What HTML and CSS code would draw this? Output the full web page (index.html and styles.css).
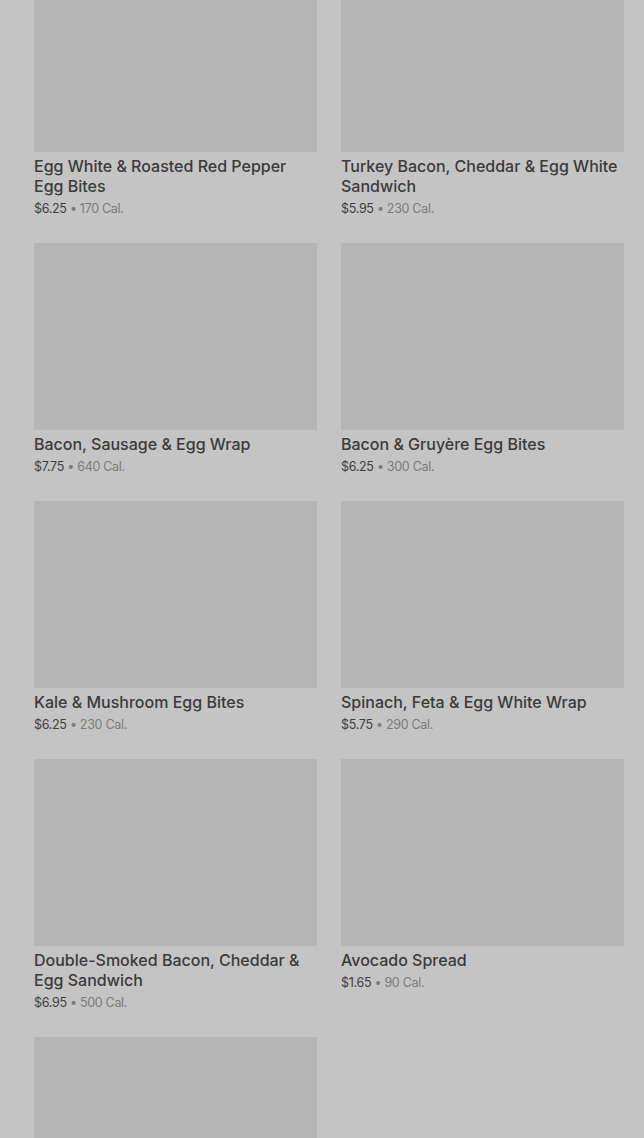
FILE: index.html
```html
<!DOCTYPE html>
<html lang="en">
<head>
<meta charset="utf-8">
<title>Menu</title>
<link rel="stylesheet" href="styles.css">
</head>
<body>
<main class="page">
  <div class="grid">
    <article class="item"><div class="thumb"></div><h3 class="name">Egg White &amp; Roasted Red Pepper Egg Bites</h3><p class="meta"><span class="price">$6.25</span> <span class="cal">• 170 Cal.</span></p></article>
    <article class="item"><div class="thumb"></div><h3 class="name">Turkey Bacon, Cheddar &amp; Egg White Sandwich</h3><p class="meta"><span class="price">$5.95</span> <span class="cal">• 230 Cal.</span></p></article>
    <article class="item"><div class="thumb"></div><h3 class="name">Bacon, Sausage &amp; Egg Wrap</h3><p class="meta"><span class="price">$7.75</span> <span class="cal">• 640 Cal.</span></p></article>
    <article class="item"><div class="thumb"></div><h3 class="name">Bacon &amp; Gruyère Egg Bites</h3><p class="meta"><span class="price">$6.25</span> <span class="cal">• 300 Cal.</span></p></article>
    <article class="item"><div class="thumb"></div><h3 class="name">Kale &amp; Mushroom Egg Bites</h3><p class="meta"><span class="price">$6.25</span> <span class="cal">• 230 Cal.</span></p></article>
    <article class="item"><div class="thumb"></div><h3 class="name">Spinach, Feta &amp; Egg White Wrap</h3><p class="meta"><span class="price">$5.75</span> <span class="cal">• 290 Cal.</span></p></article>
    <article class="item"><div class="thumb"></div><h3 class="name">Double-Smoked Bacon, Cheddar &amp; Egg Sandwich</h3><p class="meta"><span class="price">$6.95</span> <span class="cal">• 500 Cal.</span></p></article>
    <article class="item"><div class="thumb"></div><h3 class="name">Avocado Spread</h3><p class="meta"><span class="price">$1.65</span> <span class="cal">• 90 Cal.</span></p></article>
    <article class="item"><div class="thumb"></div></article>
  </div>
</main>
</body>
</html>
```

FILE: styles.css
```css
html, body {
  margin: 0;
  padding: 0;
  background: #c4c4c4;
  overflow: hidden;
  height: 1138px;
}
.page {
  padding: 0 20px 0 34px;
  font-family: Inter, "Noto Sans", Roboto, sans-serif;
}
.grid {
  margin-top: -35px;
  display: grid;
  grid-template-columns: 283px 283px;
  column-gap: 24px;
  row-gap: 26px;
  align-items: start;
}
.thumb {
  height: 187px;
  background: #b6b6b6;
}
.name {
  margin: 4px 0 0;
  font-size: 16px;
  line-height: 20px;
  font-weight: 500;
  color: #3b3b3b;
}
.meta {
  margin: 4px 0 0;
  font-size: 12.5px;
  line-height: 17px;
  letter-spacing: -0.3px;
}
.price {
  color: #3f3f3f;
}
.cal {
  color: #7b7b7b;
}
```
